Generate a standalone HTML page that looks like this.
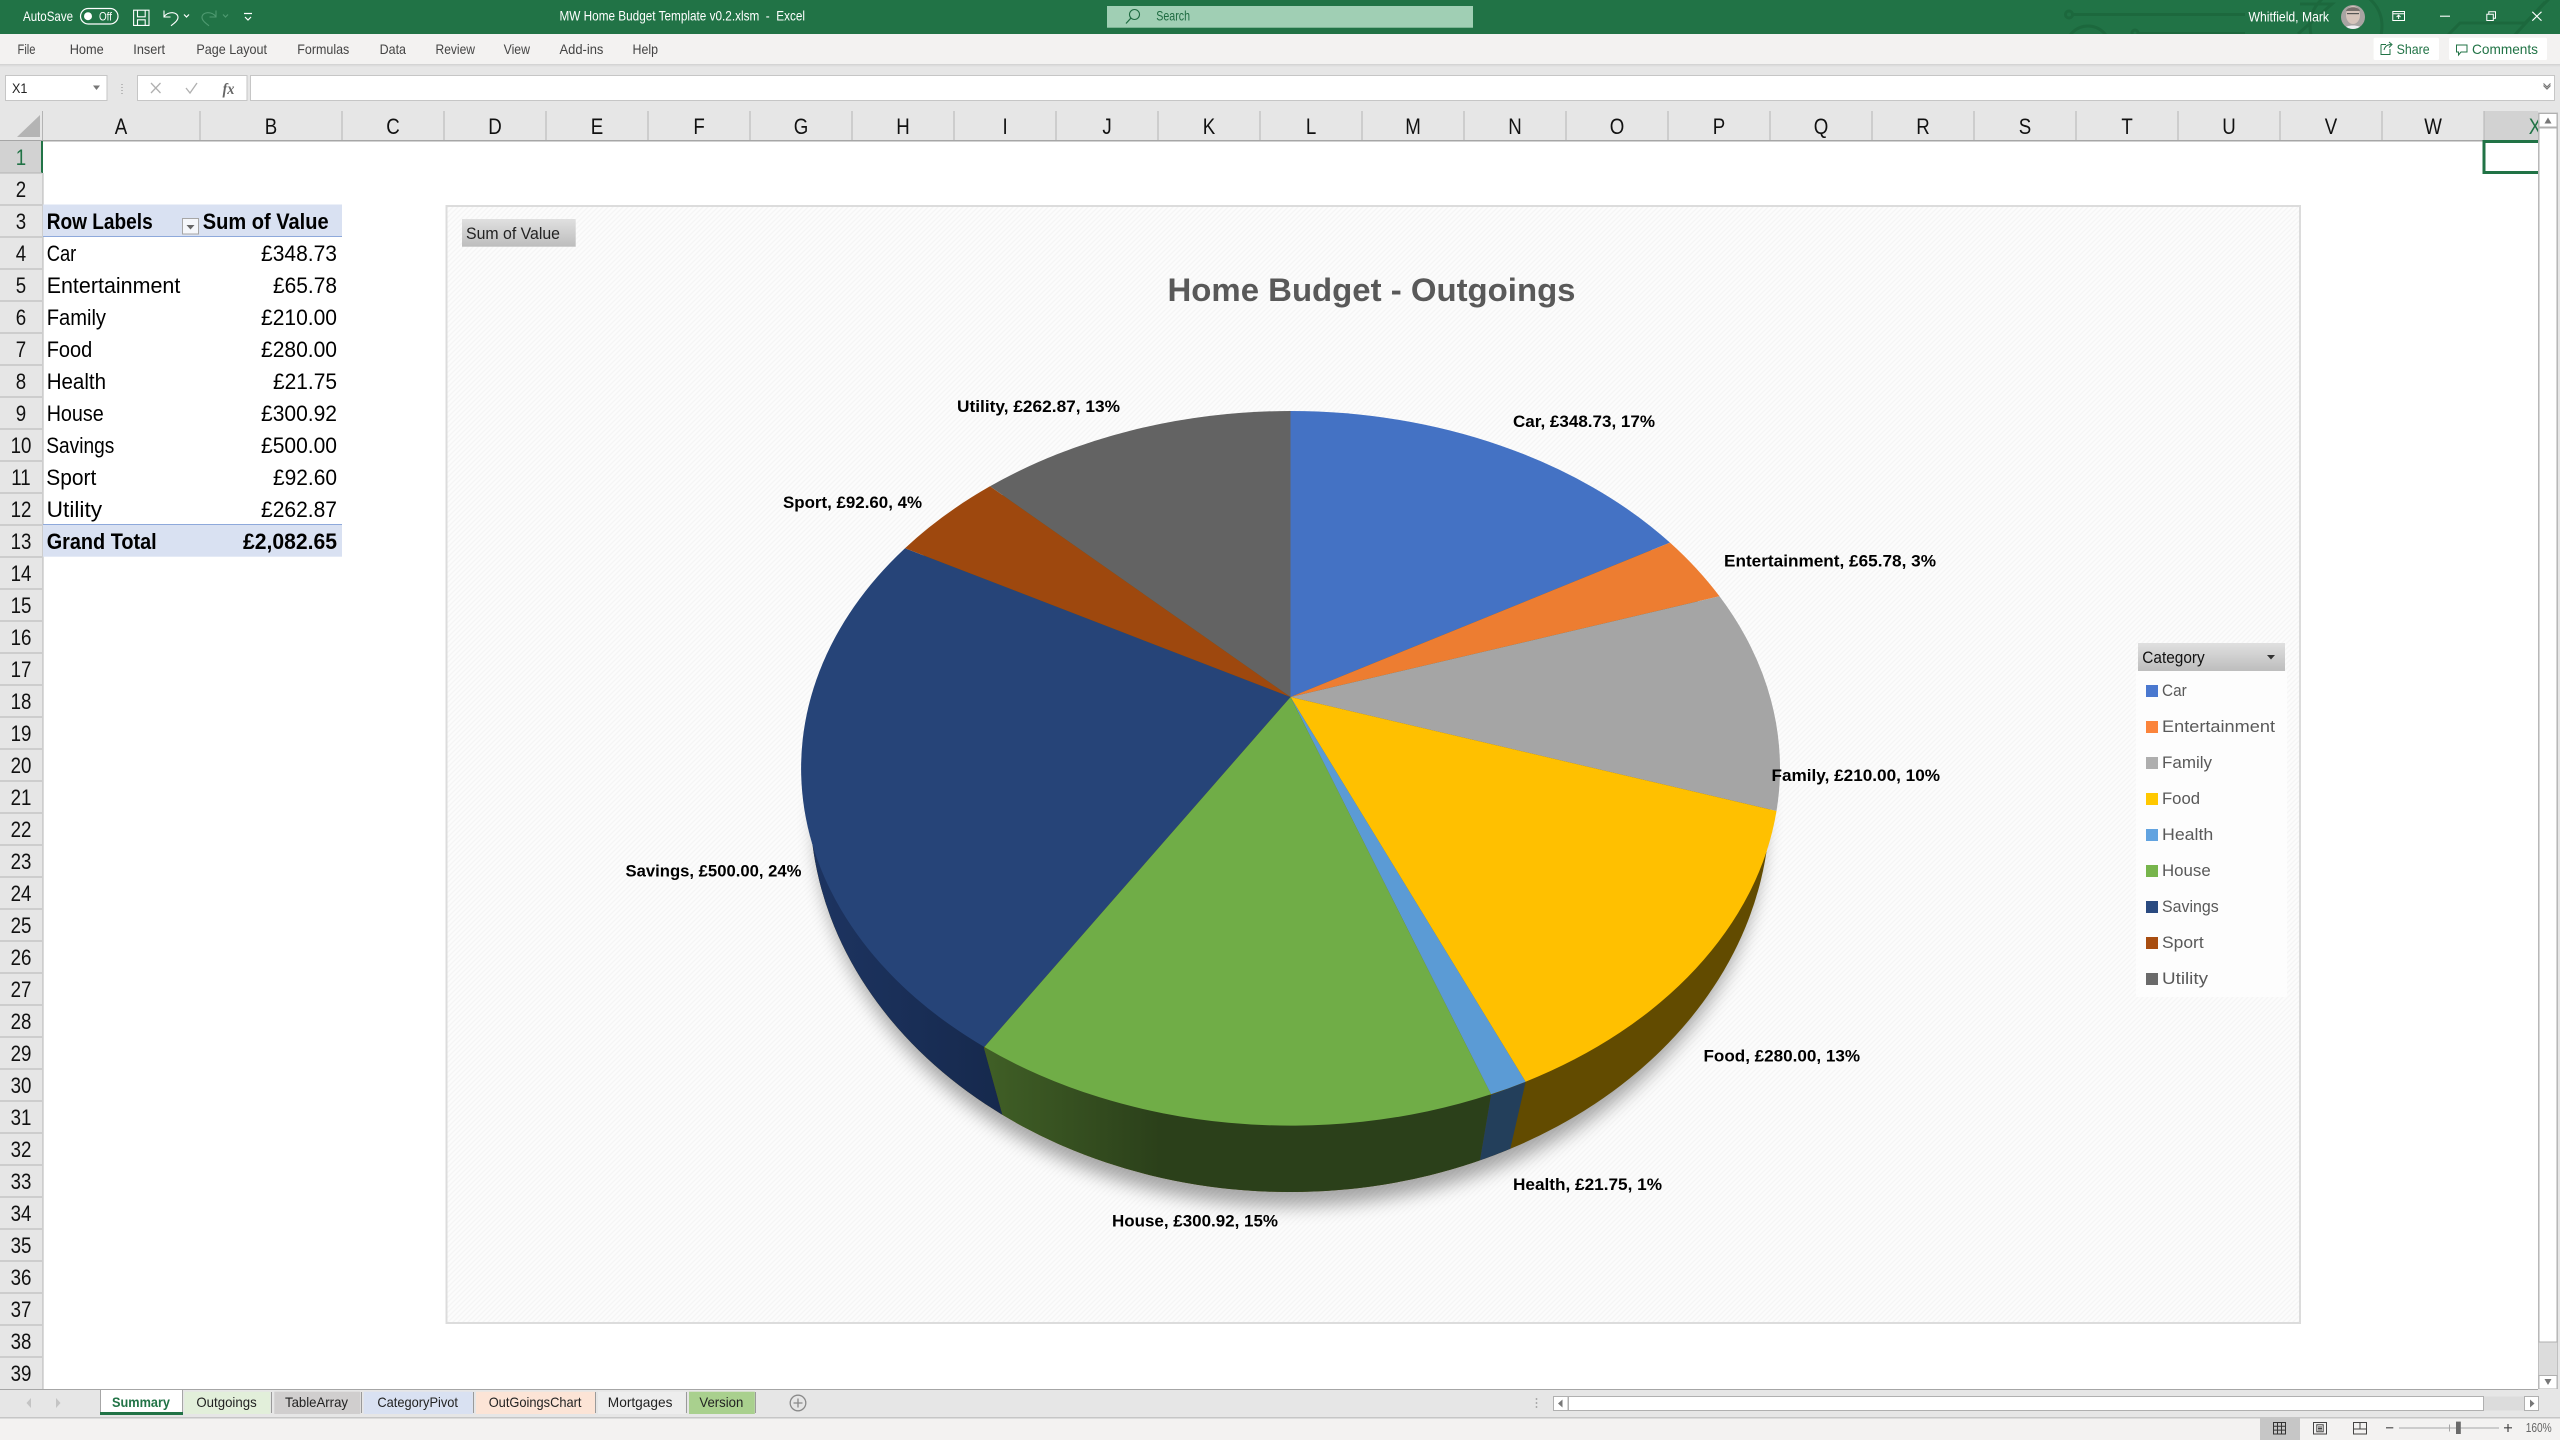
<!DOCTYPE html>
<html lang="en"><head><meta charset="utf-8"><title>MW Home Budget Template v0.2.xlsm - Excel</title>
<style>
html,body{margin:0;padding:0;background:#fff;width:2560px;height:1440px;overflow:hidden}
svg{display:block}
text{font-family:"Liberation Sans",sans-serif}
.w{fill:#fff;font-size:14px}
.r{fill:#444;font-size:14px}
.h{fill:#111;font-size:22px;text-anchor:middle}
.c{fill:#000;font-size:22px}
.b{font-weight:bold}
.l{fill:#000;font-size:17px;font-weight:bold}
.g{fill:#595959;font-size:17px}
.t{fill:#222;font-size:14px}
</style></head><body>
<svg xmlns="http://www.w3.org/2000/svg" width="2560" height="1440" viewBox="0 0 2560 1440">
<defs>
<pattern id="hatch" width="5" height="5" patternUnits="userSpaceOnUse"><rect width="5" height="5" fill="#fcfcfc"/><path d="M-1 1L1 -1M0 5L5 0M4 6L6 4" stroke="#f5f5f5" stroke-width="1.2"/></pattern>
<clipPath id="bot"><ellipse cx="1290" cy="805" rx="480" ry="387"/></clipPath>
<clipPath id="hc"><rect x="0" y="100" width="2538" height="60"/></clipPath>
<clipPath id="av"><circle cx="2353" cy="17" r="12"/></clipPath>
<clipPath id="tb"><rect x="0" y="0" width="2560" height="34"/></clipPath>
<filter id="blur" x="-10%" y="-10%" width="120%" height="120%"><feGaussianBlur stdDeviation="9"/></filter>
<linearGradient id="btn" x1="0" y1="0" x2="0" y2="1"><stop offset="0" stop-color="#e0e0e0"/><stop offset="1" stop-color="#bdbdbd"/></linearGradient>
<linearGradient id="house" gradientUnits="userSpaceOnUse" x1="985" y1="0" x2="1160" y2="0"><stop offset="0" stop-color="#405f26"/><stop offset="1" stop-color="#2b401a"/></linearGradient>
<linearGradient id="sav" gradientUnits="userSpaceOnUse" x1="810" y1="0" x2="1000" y2="0"><stop offset="0" stop-color="#1d3461"/><stop offset="1" stop-color="#16294d"/></linearGradient>
</defs>

<!-- backgrounds -->
<rect width="2560" height="1440" fill="#fff"/>
<rect x="0" y="64" width="2560" height="77" fill="#e6e6e6"/>

<!-- title bar -->
<rect width="2560" height="34" fill="#217346"/>
<g clip-path="url(#tb)" fill="none" stroke="#1c683d" stroke-width="3">
<circle cx="2069" cy="14.5" r="3.5"/><path d="M2073 14.5H2245"/>
<circle cx="2088" cy="48" r="22"/><circle cx="2135" cy="33" r="3"/><path d="M2138 33.5H2245"/>
<circle cx="2346" cy="26" r="36"/>
<path d="M2300 4H2332L2298 34"/>
<path d="M2445 38L2460 23H2525L2552 -4M2512 38L2545 2"/>
</g>
<text class="w" x="23" y="21" textLength="50" lengthAdjust="spacingAndGlyphs">AutoSave</text>
<rect x="80.5" y="8.5" width="37.5" height="15.5" rx="7.75" fill="none" stroke="#fff" stroke-width="1.2"/>
<circle cx="88" cy="16.2" r="4" fill="#fff"/>
<text x="99" y="20.5" fill="#fff" style="font-size:12px" textLength="13" lengthAdjust="spacingAndGlyphs">Off</text>
<path d="M133.6 10.2H149V25.4H133.6ZM137.5 10.2V16.8H145.2V10.2M137.5 25.4V19.8H145.2V25.4" fill="none" stroke="#fff" stroke-width="1.1"/>
<path d="M164 10.5V17H170.5M164.2 16.6C168 11 178 11.5 178 17.5C178 20.5 174.5 23 171 25.8" fill="none" stroke="#fff" stroke-width="1.1"/>
<path d="M184 14.5L186.5 17L189 14.5" fill="none" stroke="#fff" stroke-width="1.2"/>
<path d="M216 10.5V17H209.5M215.8 16.6C212 11 202 11.5 202 17.5C202 20.5 205.5 23 209 25.8" fill="none" stroke="#4e9970" stroke-width="1.1"/>
<path d="M223 14.5L225.5 17L228 14.5" fill="none" stroke="#4e9970" stroke-width="1.2"/>
<path d="M244 13.5H252M245 17L248 20L251 17" fill="none" stroke="#fff" stroke-width="1.2"/>
<text class="w" x="559.5" y="20.5" textLength="245.5" lengthAdjust="spacingAndGlyphs" xml:space="preserve">MW Home Budget Template v0.2.xlsm  -  Excel</text>
<rect x="1107" y="6" width="366" height="21.7" fill="#a0cfb4"/>
<circle cx="1134.5" cy="14.5" r="5" fill="none" stroke="#1e6b41" stroke-width="1.1"/>
<path d="M1130.8 18.2L1126 23.5" stroke="#1e6b41" stroke-width="1.2"/>
<text x="1156.3" y="20.7" fill="#1e6b41" style="font-size:14px" textLength="33.7" lengthAdjust="spacingAndGlyphs">Search</text>
<text class="w" x="2248.5" y="21.5" textLength="80.5" lengthAdjust="spacingAndGlyphs">Whitfield, Mark</text>
<g clip-path="url(#av)"><rect x="2340" y="4" width="26" height="26" fill="#a8a4a2"/><ellipse cx="2353" cy="15" rx="7" ry="9" fill="#d6c4bb"/><path d="M2346 11C2347 6 2359 6 2360 11Z" fill="#77706c"/><rect x="2347" y="13" width="12" height="1.2" fill="#555"/><path d="M2343 30C2344 24 2362 24 2363 30Z" fill="#eeeef2"/></g>
<path d="M2392.8 11.5H2404.5V20.5H2392.8ZM2392.8 13.8H2404.5M2398.6 19V15.3M2396.6 17L2398.6 15.2L2400.6 17" fill="none" stroke="#fff" stroke-width="1"/>
<path d="M2440 16.2H2450" stroke="#fff" stroke-width="1.1"/>
<path d="M2486.8 14.2H2493.3V20.5H2486.8ZM2488.8 14V11.8H2495.5V18.3H2493.5" fill="none" stroke="#fff" stroke-width="1"/>
<path d="M2532.3 11.8L2541.5 20.7M2541.5 11.8L2532.3 20.7" stroke="#fff" stroke-width="1.1"/>

<!-- ribbon tabs -->
<rect x="0" y="34" width="2560" height="30" fill="#f3f2f1"/>
<rect x="0" y="64" width="2560" height="1" fill="#d4d4d4"/>
<rect x="0" y="65" width="2560" height="1" fill="#dcdcdc"/>
<rect x="0" y="66" width="2560" height="1" fill="#e2e2e2"/>
<text class="r" x="17.5" y="54" textLength="18" lengthAdjust="spacingAndGlyphs">File</text>
<text class="r" x="69.7" y="54" textLength="34" lengthAdjust="spacingAndGlyphs">Home</text>
<text class="r" x="133.3" y="54" textLength="31.7" lengthAdjust="spacingAndGlyphs">Insert</text>
<text class="r" x="196.4" y="54" textLength="70.6" lengthAdjust="spacingAndGlyphs">Page Layout</text>
<text class="r" x="297.3" y="54" textLength="52" lengthAdjust="spacingAndGlyphs">Formulas</text>
<text class="r" x="379.6" y="54" textLength="26.4" lengthAdjust="spacingAndGlyphs">Data</text>
<text class="r" x="435.5" y="54" textLength="39.5" lengthAdjust="spacingAndGlyphs">Review</text>
<text class="r" x="503.6" y="54" textLength="26.4" lengthAdjust="spacingAndGlyphs">View</text>
<text class="r" x="559.5" y="54" textLength="43.9" lengthAdjust="spacingAndGlyphs">Add-ins</text>
<text class="r" x="632.5" y="54" textLength="25.5" lengthAdjust="spacingAndGlyphs">Help</text>
<rect x="2373.6" y="37.7" width="65.4" height="22.3" rx="1.5" fill="#fff"/>
<rect x="2449" y="37.7" width="98" height="22.3" rx="1.5" fill="#fff"/>
<path d="M2381 44.5H2386M2381 44.5V54.5H2390V49M2384 50C2385 46 2388 44.5 2391 44.5M2389 42L2392 44.5L2389 47.5" fill="none" stroke="#217346" stroke-width="1"/>
<text x="2396.6" y="54" fill="#217346" style="font-size:14px" textLength="33" lengthAdjust="spacingAndGlyphs">Share</text>
<path d="M2456.5 45H2467V52H2461L2458.5 55V52H2456.5Z" fill="none" stroke="#217346" stroke-width="1"/>
<text x="2472" y="54" fill="#217346" style="font-size:14px" textLength="66" lengthAdjust="spacingAndGlyphs">Comments</text>

<!-- formula bar -->
<rect x="5.5" y="75.5" width="101.5" height="25" fill="#fff" stroke="#c6c6c6"/>
<text class="t" x="12" y="93" textLength="15.4" lengthAdjust="spacingAndGlyphs">X1</text>
<path d="M93 85.5H100L96.5 90Z" fill="#777"/>
<path d="M122 84V85M122 87V88M122 90V91M122 93V94" stroke="#aaa" stroke-width="1.5"/>
<rect x="137.5" y="75.5" width="109.5" height="25" fill="#fff" stroke="#c6c6c6"/>
<path d="M151 83L160.5 93M160.5 83L151 93" stroke="#b0b0b0" stroke-width="1.3"/>
<path d="M186 88L190 93L197 83" fill="none" stroke="#b0b0b0" stroke-width="1.3"/>
<text x="222.5" y="94" fill="#666" style="font-family:'Liberation Serif',serif;font-style:italic;font-weight:bold;font-size:16px" textLength="12" lengthAdjust="spacingAndGlyphs">fx</text>
<rect x="250.5" y="75.5" width="2304" height="25" fill="#fff" stroke="#c6c6c6"/>
<path d="M2543.5 85.5L2547 89L2550.5 85.5M2543.5 83.5L2547 87L2550.5 83.5" fill="none" stroke="#777" stroke-width="1.2"/>

<!-- column header -->
<rect x="0" y="111" width="2538" height="30" fill="#e6e6e6"/>
<rect x="2484" y="111" width="54" height="29" fill="#d2d2d2"/>
<path d="M40 115V137H17Z" fill="#b4b4b4"/>
<path d="M42.5 111V141M200 111V140M342 111V140M444 111V140M546 111V140M648 111V140M750 111V140M852 111V140M954 111V140M1056 111V140M1158 111V140M1260 111V140M1362 111V140M1464 111V140M1566 111V140M1668 111V140M1770 111V140M1872 111V140M1974 111V140M2076 111V140M2178 111V140M2280 111V140M2382 111V140M2484 111V140" stroke="#b4b4b4" stroke-width="1"/>
<rect x="0" y="140" width="2538" height="1.5" fill="#a6a6a6"/>
<g clip-path="url(#hc)"><g transform="scale(.85,1)">
<text class="h" x="142.4" y="134">A</text><text class="h" x="318.8" y="134">B</text><text class="h" x="462.4" y="134">C</text><text class="h" x="582.4" y="134">D</text><text class="h" x="702.4" y="134">E</text><text class="h" x="822.4" y="134">F</text><text class="h" x="942.4" y="134">G</text><text class="h" x="1062.4" y="134">H</text><text class="h" x="1182.4" y="134">I</text><text class="h" x="1302.4" y="134">J</text><text class="h" x="1422.4" y="134">K</text><text class="h" x="1542.4" y="134">L</text><text class="h" x="1662.4" y="134">M</text><text class="h" x="1782.4" y="134">N</text><text class="h" x="1902.4" y="134">O</text><text class="h" x="2022.4" y="134">P</text><text class="h" x="2142.4" y="134">Q</text><text class="h" x="2262.4" y="134">R</text><text class="h" x="2382.4" y="134">S</text><text class="h" x="2502.4" y="134">T</text><text class="h" x="2622.4" y="134">U</text><text class="h" x="2742.4" y="134">V</text><text class="h" x="2862.4" y="134">W</text><text class="h" x="2982.4" y="134" style="fill:#217346">X</text>
</g></g>

<!-- row header -->
<rect x="0" y="141" width="42.5" height="1248" fill="#e6e6e6"/>
<rect x="0" y="141" width="41" height="32" fill="#d2d2d2"/>
<rect x="41" y="141" width="2" height="32" fill="#217346"/>
<rect x="42.5" y="173" width="1" height="1216" fill="#b4b4b4"/>
<path d="M0 173H42M0 205H42M0 237H42M0 269H42M0 301H42M0 333H42M0 365H42M0 397H42M0 429H42M0 461H42M0 493H42M0 525H42M0 557H42M0 589H42M0 621H42M0 653H42M0 685H42M0 717H42M0 749H42M0 781H42M0 813H42M0 845H42M0 877H42M0 909H42M0 941H42M0 973H42M0 1005H42M0 1037H42M0 1069H42M0 1101H42M0 1133H42M0 1165H42M0 1197H42M0 1229H42M0 1261H42M0 1293H42M0 1325H42M0 1357H42" stroke="#b4b4b4" stroke-width="1"/>
<g transform="translate(21,0) scale(.85,1)">
<text class="h" x="0" y="165" style="fill:#217346">1</text><text class="h" x="0" y="197">2</text><text class="h" x="0" y="229">3</text><text class="h" x="0" y="261">4</text><text class="h" x="0" y="293">5</text><text class="h" x="0" y="325">6</text><text class="h" x="0" y="357">7</text><text class="h" x="0" y="389">8</text><text class="h" x="0" y="421">9</text><text class="h" x="0" y="453">10</text><text class="h" x="0" y="485">11</text><text class="h" x="0" y="517">12</text><text class="h" x="0" y="549">13</text><text class="h" x="0" y="581">14</text><text class="h" x="0" y="613">15</text><text class="h" x="0" y="645">16</text><text class="h" x="0" y="677">17</text><text class="h" x="0" y="709">18</text><text class="h" x="0" y="741">19</text><text class="h" x="0" y="773">20</text><text class="h" x="0" y="805">21</text><text class="h" x="0" y="837">22</text><text class="h" x="0" y="869">23</text><text class="h" x="0" y="901">24</text><text class="h" x="0" y="933">25</text><text class="h" x="0" y="965">26</text><text class="h" x="0" y="997">27</text><text class="h" x="0" y="1029">28</text><text class="h" x="0" y="1061">29</text><text class="h" x="0" y="1093">30</text><text class="h" x="0" y="1125">31</text><text class="h" x="0" y="1157">32</text><text class="h" x="0" y="1189">33</text><text class="h" x="0" y="1221">34</text><text class="h" x="0" y="1253">35</text><text class="h" x="0" y="1285">36</text><text class="h" x="0" y="1317">37</text><text class="h" x="0" y="1349">38</text><text class="h" x="0" y="1381">39</text>
</g>

<!-- selected cell -->
<path d="M2538 141.5H2484V172.5H2538" fill="none" stroke="#217346" stroke-width="3"/>

<!-- pivot table -->
<rect x="43" y="204.5" width="299" height="32" fill="#d9e1f2"/>
<rect x="43" y="236" width="299" height="1" fill="#8ea9db"/>
<rect x="43" y="524" width="299" height="32.7" fill="#d9e1f2"/>
<rect x="43" y="524" width="299" height="1" fill="#8ea9db"/>
<text class="c b" x="46.7" y="229" textLength="106" lengthAdjust="spacingAndGlyphs">Row Labels</text>
<rect x="182.5" y="218.5" width="16" height="15.5" fill="#f5f7fb" stroke="#a6a6a6"/>
<path d="M186.5 225H194.5L190.5 229.5Z" fill="#666"/>
<text class="c b" x="202.8" y="229" textLength="125.8" lengthAdjust="spacingAndGlyphs">Sum of Value</text>
<text class="c" x="46.7" y="261" textLength="29.6" lengthAdjust="spacingAndGlyphs">Car</text><text class="c" x="261" y="261" textLength="76" lengthAdjust="spacingAndGlyphs">£348.73</text>
<text class="c" x="46.7" y="293" textLength="133.6" lengthAdjust="spacingAndGlyphs">Entertainment</text><text class="c" x="273" y="293" textLength="64" lengthAdjust="spacingAndGlyphs">£65.78</text>
<text class="c" x="46.7" y="325" textLength="59.3" lengthAdjust="spacingAndGlyphs">Family</text><text class="c" x="261" y="325" textLength="76" lengthAdjust="spacingAndGlyphs">£210.00</text>
<text class="c" x="46.7" y="357" textLength="45.5" lengthAdjust="spacingAndGlyphs">Food</text><text class="c" x="261" y="357" textLength="76" lengthAdjust="spacingAndGlyphs">£280.00</text>
<text class="c" x="46.7" y="389" textLength="59.3" lengthAdjust="spacingAndGlyphs">Health</text><text class="c" x="273" y="389" textLength="64" lengthAdjust="spacingAndGlyphs">£21.75</text>
<text class="c" x="46.7" y="421" textLength="57" lengthAdjust="spacingAndGlyphs">House</text><text class="c" x="261" y="421" textLength="76" lengthAdjust="spacingAndGlyphs">£300.92</text>
<text class="c" x="46.3" y="453" textLength="68" lengthAdjust="spacingAndGlyphs">Savings</text><text class="c" x="261" y="453" textLength="76" lengthAdjust="spacingAndGlyphs">£500.00</text>
<text class="c" x="46.3" y="485" textLength="50" lengthAdjust="spacingAndGlyphs">Sport</text><text class="c" x="273" y="485" textLength="64" lengthAdjust="spacingAndGlyphs">£92.60</text>
<text class="c" x="46.7" y="517" textLength="55.4" lengthAdjust="spacingAndGlyphs">Utility</text><text class="c" x="261" y="517" textLength="76" lengthAdjust="spacingAndGlyphs">£262.87</text>
<text class="c b" x="46.7" y="549" textLength="110" lengthAdjust="spacingAndGlyphs">Grand Total</text><text class="c b" x="243" y="549" textLength="94" lengthAdjust="spacingAndGlyphs">£2,082.65</text>

<!-- chart -->
<rect x="446.5" y="206" width="1853.5" height="1117" fill="url(#hatch)" stroke="#dcdcdc" stroke-width="2"/>
<rect x="462" y="219" width="113.7" height="27.7" fill="url(#btn)"/>
<text x="466" y="239" fill="#222" style="font-size:17px" textLength="94" lengthAdjust="spacingAndGlyphs">Sum of Value</text>
<text x="1167.5" y="301" fill="#595959" class="b" style="font-size:32px" textLength="408" lengthAdjust="spacingAndGlyphs">Home Budget - Outgoings</text>

<!-- shadow + pie side -->
<ellipse cx="1290" cy="822" rx="474" ry="384" fill="#000" opacity=".34" filter="url(#blur)"/>
<ellipse cx="1290" cy="805" rx="480" ry="387" fill="#624b00"/>
<g clip-path="url(#bot)">
<polygon points="984,1048 1002.5,1115 1040,1250 700,1250 700,700 984,700" fill="url(#sav)"/>
<polygon points="984,1048 1491,1095 1480,1160 1465,1250 1040,1250 1002.5,1115" fill="url(#house)"/>
<polygon points="1491,1095 1525.6,1082 1510,1150 1487,1250 1465,1250 1480,1160" fill="#233f5b"/>
</g>
<!-- pie top -->
<path d="M1290.5 697L1290.5 411A489.5 357.3 0 0 1 1670 542.6Z" fill="#4472c4"/>
<path d="M1290.5 697L1670 542.6A489.5 357.3 0 0 1 1719.5 596.3Z" fill="#ed7d31"/>
<path d="M1290.5 697L1719.5 596.3A489.5 357.3 0 0 1 1776.5 811Z" fill="#a5a5a5"/>
<path d="M1290.5 697L1776.5 811A489.5 357.3 0 0 1 1525.6 1081.7Z" fill="#ffc000"/>
<path d="M1290.5 697L1525.6 1081.7A489.5 357.3 0 0 1 1491 1094.3Z" fill="#5b9bd5"/>
<path d="M1290.5 697L1491 1094.3A489.5 357.3 0 0 1 984.3 1047Z" fill="#70ad47"/>
<path d="M1290.5 697L984.3 1047A489.5 357.3 0 0 1 905 548.2Z" fill="#264478"/>
<path d="M1290.5 697L905 548.2A489.5 357.3 0 0 1 990 486.3Z" fill="#9e480e"/>
<path d="M1290.5 697L990 486.3A489.5 357.3 0 0 1 1290.5 411Z" fill="#636363"/>

<!-- data labels -->
<text class="l" x="1513" y="427" textLength="142" lengthAdjust="spacingAndGlyphs">Car, £348.73, 17%</text>
<text class="l" x="1724" y="566.5" textLength="212" lengthAdjust="spacingAndGlyphs">Entertainment, £65.78, 3%</text>
<text class="l" x="1771.5" y="781" textLength="168.5" lengthAdjust="spacingAndGlyphs">Family, £210.00, 10%</text>
<text class="l" x="1703.5" y="1061.5" textLength="156.5" lengthAdjust="spacingAndGlyphs">Food, £280.00, 13%</text>
<text class="l" x="1513" y="1190" textLength="149" lengthAdjust="spacingAndGlyphs">Health, £21.75, 1%</text>
<text class="l" x="1112" y="1226.5" textLength="166" lengthAdjust="spacingAndGlyphs">House, £300.92, 15%</text>
<text class="l" x="625.5" y="876.5" textLength="176" lengthAdjust="spacingAndGlyphs">Savings, £500.00, 24%</text>
<text class="l" x="783" y="508" textLength="139" lengthAdjust="spacingAndGlyphs">Sport, £92.60, 4%</text>
<text class="l" x="957" y="412" textLength="163" lengthAdjust="spacingAndGlyphs">Utility, £262.87, 13%</text>

<!-- legend -->
<rect x="2136" y="671" width="151" height="326" fill="#fdfdfd"/>
<rect x="2138" y="643" width="147" height="28" fill="url(#btn)"/>
<text x="2142.3" y="663" fill="#111" style="font-size:17px" textLength="62.4" lengthAdjust="spacingAndGlyphs">Category</text>
<path d="M2267 655H2275L2271 659.5Z" fill="#333"/>
<rect x="2146" y="685" width="12" height="12" fill="#4a78cf"/><text class="g" x="2162" y="696" textLength="24.7" lengthAdjust="spacingAndGlyphs">Car</text>
<rect x="2146" y="721" width="12" height="12" fill="#fb843b"/><text class="g" x="2162" y="732" textLength="113" lengthAdjust="spacingAndGlyphs">Entertainment</text>
<rect x="2146" y="757" width="12" height="12" fill="#aeaeae"/><text class="g" x="2162" y="768" textLength="50" lengthAdjust="spacingAndGlyphs">Family</text>
<rect x="2146" y="793" width="12" height="12" fill="#ffc800"/><text class="g" x="2162" y="804" textLength="38" lengthAdjust="spacingAndGlyphs">Food</text>
<rect x="2146" y="829" width="12" height="12" fill="#62a3e0"/><text class="g" x="2162" y="840" textLength="51.3" lengthAdjust="spacingAndGlyphs">Health</text>
<rect x="2146" y="865" width="12" height="12" fill="#77b54c"/><text class="g" x="2162" y="876" textLength="48.7" lengthAdjust="spacingAndGlyphs">House</text>
<rect x="2146" y="901" width="12" height="12" fill="#2a4a80"/><text class="g" x="2162" y="912" textLength="56.7" lengthAdjust="spacingAndGlyphs">Savings</text>
<rect x="2146" y="937" width="12" height="12" fill="#a84d10"/><text class="g" x="2162" y="948" textLength="41.7" lengthAdjust="spacingAndGlyphs">Sport</text>
<rect x="2146" y="973" width="12" height="12" fill="#6a6a6a"/><text class="g" x="2162" y="984" textLength="46" lengthAdjust="spacingAndGlyphs">Utility</text>

<!-- vertical scrollbar -->
<rect x="2538" y="101" width="22" height="1317" fill="#e6e6e6"/>
<rect x="2538.5" y="113" width="19" height="1276.5" fill="#dcdcdc" stroke="#c0c0c0"/>
<rect x="2539" y="113.5" width="18" height="13.5" fill="#fff" stroke="#b0b0b0"/>
<path d="M2544.5 123.5H2551.5L2548 117.5Z" fill="#777"/>
<rect x="2539" y="128" width="18" height="1214" fill="#fff" stroke="#b0b0b0"/>
<rect x="2539" y="1375.5" width="18" height="13.5" fill="#fff" stroke="#b0b0b0"/>
<path d="M2544.5 1379H2551.5L2548 1385Z" fill="#777"/>

<!-- sheet tab bar -->
<rect x="0" y="1389" width="2560" height="28" fill="#e6e6e6"/>
<rect x="0" y="1389" width="2538" height="1" fill="#a6a6a6"/>
<rect x="0" y="1417" width="2560" height="1.5" fill="#c6c6c6"/>
<rect x="0" y="1418.5" width="2560" height="21.5" fill="#f3f2f1"/>
<path d="M31 1398V1408L26.5 1403ZM56 1398V1408L60.5 1403Z" fill="#c4c4c4"/>
<rect x="100.5" y="1389" width="82.2" height="25" fill="#fff"/>
<path d="M100.5 1414V1389.5H182.5V1414" fill="none" stroke="#a6a6a6"/>
<rect x="100" y="1412" width="83" height="3" fill="#217346"/>
<text x="112" y="1407" fill="#217346" class="b" style="font-size:14px" textLength="58" lengthAdjust="spacingAndGlyphs">Summary</text>
<rect x="184.3" y="1391.7" width="86" height="22.3" fill="#e2efda"/>
<text class="t" x="196.4" y="1407" textLength="60.3" lengthAdjust="spacingAndGlyphs">Outgoings</text>
<rect x="274.3" y="1391.7" width="86" height="22.3" fill="#d0cece"/>
<text class="t" x="285" y="1407" textLength="63" lengthAdjust="spacingAndGlyphs">TableArray</text>
<rect x="363.7" y="1391.7" width="109" height="22.3" fill="#d9e1f2"/>
<text class="t" x="377.4" y="1407" textLength="80.6" lengthAdjust="spacingAndGlyphs">CategoryPivot</text>
<rect x="476" y="1391.7" width="119" height="22.3" fill="#fce4d6"/>
<text class="t" x="488.7" y="1407" textLength="92.8" lengthAdjust="spacingAndGlyphs">OutGoingsChart</text>
<rect x="598" y="1391.7" width="87.7" height="22.3" fill="#ededed"/>
<text class="t" x="607.8" y="1407" textLength="64.7" lengthAdjust="spacingAndGlyphs">Mortgages</text>
<rect x="689" y="1391.7" width="65.8" height="22.3" fill="#a9d08e"/>
<text class="t" x="699.4" y="1407" textLength="43.9" lengthAdjust="spacingAndGlyphs">Version</text>
<path d="M271.5 1392V1413M361.5 1392V1413M473.5 1392V1413M595.5 1392V1413M686.5 1392V1413M755.5 1392V1413" stroke="#9a9a9a" stroke-width="1"/>
<circle cx="798" cy="1403" r="7.8" fill="none" stroke="#8a8a8a" stroke-width="1.3"/>
<path d="M793.5 1403H802.5M798 1398.5V1407.5" stroke="#8a8a8a" stroke-width="1.3"/>

<!-- horizontal scrollbar -->
<path d="M1536.5 1398V1400M1536.5 1402V1404M1536.5 1406V1408" stroke="#aaa" stroke-width="1.5"/>
<rect x="1553.5" y="1396.5" width="985" height="14" fill="#dcdcdc"/>
<rect x="1553.5" y="1396.5" width="14.5" height="14" fill="#fff" stroke="#b0b0b0"/>
<path d="M1562.5 1399.5V1407.5L1558 1403.5Z" fill="#777"/>
<rect x="1568.5" y="1396.5" width="915" height="14" fill="#fff" stroke="#b0b0b0"/>
<rect x="2524.5" y="1396.5" width="14" height="14" fill="#fff" stroke="#b0b0b0"/>
<path d="M2530 1399.5V1407.5L2534.5 1403.5Z" fill="#777"/>

<!-- status bar -->
<rect x="2260" y="1418.5" width="40" height="21.5" fill="#c6c6c6"/>
<path d="M2273.5 1422.5H2285.5V1434H2273.5ZM2277.5 1422.5V1434M2281.5 1422.5V1434M2273.5 1426.3H2285.5M2273.5 1430.1H2285.5" fill="none" stroke="#333" stroke-width="1"/>
<path d="M2313.5 1422.5H2326.5V1434H2313.5ZM2316.8 1424.8H2323.2V1431.7H2316.8ZM2318 1427H2322M2318 1428.5H2322M2318 1430H2322" fill="none" stroke="#444" stroke-width="1"/>
<path d="M2353.5 1422.500H2366.5V1434H2353.5ZM2360 1422.5V1429M2353.5 1429H2366.5" fill="none" stroke="#444" stroke-width="1"/>
<path d="M2386 1427.8H2393.3M2504 1427.8H2512M2508 1424V1432" stroke="#444" stroke-width="1.2"/>
<rect x="2399" y="1427.5" width="100" height="1" fill="#a6a6a6"/>
<rect x="2449" y="1424.5" width="1" height="7" fill="#a6a6a6"/>
<rect x="2456" y="1421.6" width="4.8" height="12.4" fill="#6a6a6a"/>
<text x="2525.7" y="1432" fill="#666" style="font-size:13px" textLength="26" lengthAdjust="spacingAndGlyphs">160%</text>
</svg>
</body></html>
